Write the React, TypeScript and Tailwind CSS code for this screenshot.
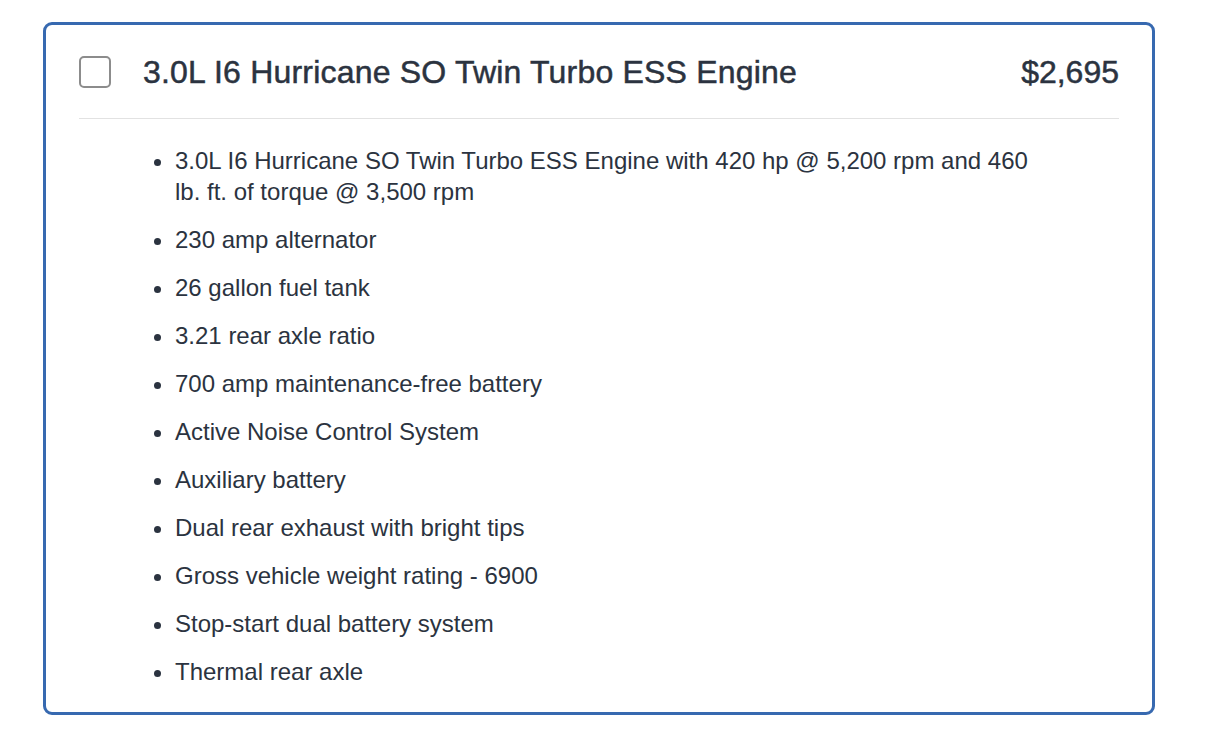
const features = [
  "3.0L I6 Hurricane SO Twin Turbo ESS Engine with 420 hp @ 5,200 rpm and 460 lb. ft. of torque @ 3,500 rpm",
  "230 amp alternator",
  "26 gallon fuel tank",
  "3.21 rear axle ratio",
  "700 amp maintenance-free battery",
  "Active Noise Control System",
  "Auxiliary battery",
  "Dual rear exhaust with bright tips",
  "Gross vehicle weight rating - 6900",
  "Stop-start dual battery system",
  "Thermal rear axle",
];

export default function App() {
  return (
    <div className="min-h-screen bg-white pt-[22px] pl-[43px] font-['Liberation_Sans',Arial,sans-serif] text-[#2b3340]">
      <div className="w-[1112px] h-[693px] rounded-[9px] border-[3px] border-[#3769b0] bg-white px-[33px]">
        {/* Header */}
        <div className="flex items-center h-[94px] border-b border-[#e2e2e2]">
          <div className="w-[32px] h-[32px] rounded-[5px] border-2 border-[#8c8c8c] shrink-0" />
          <h2 className="ml-[32px] text-[32px] tracking-[0.2px] flex-1 [-webkit-text-stroke:0.5px_#2b3340]">
            3.0L I6 Hurricane SO Twin Turbo ESS Engine
          </h2>
          <span className="text-[32px] [-webkit-text-stroke:0.5px_#2b3340]">$2,695</span>
        </div>

        {/* Features */}
        <ul className="list-disc pl-[96px] pr-[78px] pt-[26px] text-[24px] leading-[31px]">
          {features.map((f) => (
            <li key={f} className="mb-[17px]">
              {f}
            </li>
          ))}
        </ul>
      </div>
    </div>
  );
}
